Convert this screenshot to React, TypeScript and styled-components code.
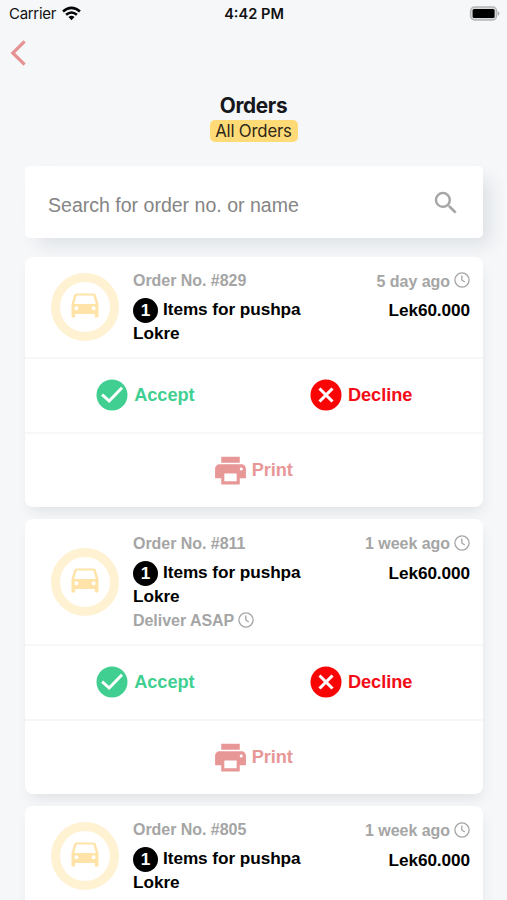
import React from "react";
import styled, { createGlobalStyle } from "styled-components";

const GlobalStyle = createGlobalStyle`
  * { box-sizing: border-box; }
  body {
    margin: 0;
    height: 900px;
    overflow: hidden;
    background: #f5f7f9;
    font-family: "Liberation Sans", Arial, sans-serif;
  }
`;

const Screen = styled.main`
  width: 507px;
  height: 900px;
  overflow: hidden;
  display: flex;
  flex-direction: column;
`;

const StatusBar = styled.header`
  height: 28px;
  padding: 0 7px 1px 9px;
  display: grid;
  grid-template-columns: 1fr auto 1fr;
  align-items: center;
  flex: none;
  font-family: Inter, sans-serif;
  color: #111;
`;

const Carrier = styled.div`
  display: flex;
  align-items: center;
  gap: 6px;
  font-size: 15px;
  letter-spacing: -0.3px;
`;

const Clock = styled.time`
  font-size: 14.6px;
  font-weight: 600;
  padding-right: 1px;
`;

const Battery = styled.div`
  display: flex;
  justify-content: flex-end;
`;

const Nav = styled.nav`
  height: 64px;
  flex: none;
  padding: 11px 0 0 10px;
`;

const BackButton = styled.button`
  display: block;
  padding: 0;
  border: 0;
  background: none;
`;

const Heading = styled.section`
  height: 74px;
  flex: none;
  display: flex;
  flex-direction: column;
  align-items: center;
  font-family: Inter, sans-serif;
  color: #16171c;
`;

const Title = styled.h1`
  margin: 0;
  height: 28px;
  font-size: 20.8px;
  line-height: 27px;
  font-weight: 700;
  letter-spacing: -0.35px;
`;

const Filter = styled.span`
  width: 88px;
  height: 21.5px;
  border-radius: 5px;
  background: #ffdb78;
  font-size: 16.8px;
  letter-spacing: -0.2px;
  line-height: 22px;
  text-align: center;
  color: #2e2818;
`;

const SearchBox = styled.label`
  height: 72px;
  flex: none;
  margin: 0 24.5px 18.5px 25px;
  padding: 0 21.5px 0 23px;
  display: flex;
  align-items: center;
  border-radius: 5px;
  background: #fff;
  box-shadow: 10px 10px 18px -3px rgba(50, 55, 65, 0.11);
`;

const SearchInput = styled.input`
  flex: 1;
  min-width: 0;
  height: 30px;
  margin-top: 7px;
  padding: 0;
  border: 0;
  outline: 0;
  background: none;
  font: 19.55px "Liberation Sans", Arial, sans-serif;
  &::placeholder { color: #858585; opacity: 1; }
`;

const SearchSlot = styled.span`
  display: flex;
  padding-top: 2px;
`;

const List = styled.section`
  display: flex;
  flex-direction: column;
  gap: 12px;
  margin: 0 24.5px 0 25px;
`;

const Card = styled.article`
  flex: none;
  border-radius: 8px;
  background: #fff;
  box-shadow: 2px 8px 14px -4px rgba(45, 55, 60, 0.11);
`;

const Info = styled.div<{ $tall: boolean }>`
  height: ${(p) => (p.$tall ? 125 : 100.5)}px;
  padding: 0 12.5px 0 26px;
  display: grid;
  grid-template-columns: 68px 180px 1fr;
  column-gap: 14px;
`;

const Ring = styled.div`
  width: 68px;
  height: 68px;
  align-self: center;
  display: grid;
  place-items: center;
  padding-bottom: 3px;
  border: 9px solid #fff2d3;
  border-radius: 50%;
`;

const Details = styled.div<{ $tall: boolean }>`
  padding-top: ${(p) => (p.$tall ? 15 : 14.5)}px;
`;

const Muted = styled.div`
  display: flex;
  align-items: center;
  gap: 4px;
  height: 19px;
  font-size: 16px;
  letter-spacing: -0.04px;
  font-weight: 700;
  color: #a5a5a5;
  white-space: nowrap;
`;

const ClockSlot = styled.span`
  display: flex;
  padding-bottom: 3px;
`;

const Customer = styled.div`
  margin-top: 6.5px;
  height: 52px;
  font-size: 17.2px;
  letter-spacing: -0.06px;
  line-height: 24px;
  font-weight: 700;
  color: #000;
`;

const Count = styled.span`
  display: inline-block;
  width: 25px;
  height: 25px;
  margin: -1px 5px -2px 0;
  border-radius: 50%;
  background: #000;
  color: #fff;
  text-align: center;
  line-height: 25px;
  vertical-align: middle;
`;

const Meta = styled.div`
  display: flex;
  flex-direction: column;
  align-items: flex-end;
  padding-top: 15.5px;
`;

const Price = styled.strong`
  margin-top: 9px;
  font-size: 17.2px;
  letter-spacing: -0.08px;
  line-height: 20px;
`;

const Row = styled.div<{ $columns: number }>`
  height: 75px;
  border-top: 2px solid #f6f7f7;
  display: grid;
  grid-template-columns: repeat(${(p) => p.$columns}, 1fr);
`;

const Action = styled.button<{ $color: string; $left?: number; $right?: number; $gap?: number }>`
  display: flex;
  align-items: center;
  justify-content: center;
  gap: ${(p) => p.$gap ?? 6}px;
  padding: 0 ${(p) => p.$right ?? 0}px 1px ${(p) => p.$left ?? 0}px;
  border: 0;
  background: none;
  color: ${(p) => p.$color};
  font: 700 18.2px "Liberation Sans", Arial, sans-serif;
  letter-spacing: -0.05px;
`;

const WifiIcon = () => (
  <svg width="19" height="15" viewBox="0 0 19 15" fill="none" stroke="#050505">
    <path d="M1 5.5Q9.5-1.7 18 5.5M4.1 8.8Q9.5 4.2 14.9 8.8" strokeWidth="2.6" />
    <path d="M6.5 11.1Q9.5 8.5 12.5 11.1L9.5 14.3Z" fill="#050505" stroke="none" />
  </svg>
);

const BatteryIcon = () => (
  <svg width="31" height="15" viewBox="0 0 31 15">
    <rect x="1.6" y="1" width="26" height="13" rx="4" fill="#d9dadb" stroke="#b4b5b6" strokeWidth="1.4" />
    <rect x="3.6" y="3" width="22" height="9" rx="1.5" fill="#000" />
    <path d="M28.8 5Q32 7.5 28.8 10Z" fill="#a8a9aa" />
  </svg>
);

const BackIcon = () => (
  <svg width="17" height="28" viewBox="0 0 17 28" fill="none" stroke="#e79292" strokeWidth="3.2">
    <path d="M14.6 2.4 2.8 14l11.8 11.6" />
  </svg>
);

const SearchIcon = () => (
  <svg width="30" height="30" viewBox="0 0 24 24" fill="#a5a5a5">
    <path d="M15.5 14h-.79l-.28-.27A6.47 6.47 0 0 0 16 9.5 6.5 6.5 0 1 0 9.5 16c1.61 0 3.09-.59 4.23-1.57l.27.28v.79l5 4.99L20.49 19zm-6 0C7.01 14 5 11.99 5 9.5S7.01 5 9.5 5 14 7.01 14 9.5 11.99 14 9.5 14" />
  </svg>
);

const CarIcon = () => (
  <svg width="28" height="25" viewBox="0 0 28 25" fill="#ffe3a9">
    <path
      fillRule="evenodd"
      d="M5.6.5H22.4c1.3 0 2.1.7 2.5 1.9L27.5 11v12.4c0 .7-.5 1.1-1.2 1.1H25c-.7 0-1.2-.4-1.2-1.1V21H4.2v2.4c0 .7-.5 1.1-1.2 1.1H1.7c-.7 0-1.2-.4-1.2-1.1V11L3.1 2.4C3.5 1.2 4.3.5 5.6.5ZM3.2 11h21.6L22.4 2.6H5.6ZM5.4 13.2a2 2 0 1 0 0 4 2 2 0 1 0 0-4ZM22.6 13.2a2 2 0 1 0 0 4 2 2 0 1 0 0-4Z"
    />
  </svg>
);

const ClockIcon = () => (
  <ClockSlot>
    <svg width="16" height="16" viewBox="0 0 16 16" fill="none" stroke="#a5a5a5" strokeWidth="1.3">
      <circle cx="8" cy="8" r="7.1" />
      <path d="M7.8 3.6V8l3 2" />
    </svg>
  </ClockSlot>
);

const CheckIcon = () => (
  <svg width="32" height="32" viewBox="0 0 32 32">
    <circle cx="16" cy="16" r="15.5" fill="#40cf91" />
    <path d="m6.1 15.7 7.1 6.3L26 8.7" fill="none" stroke="#fff" strokeWidth="3" />
  </svg>
);

const CrossIcon = () => (
  <svg width="32" height="32" viewBox="0 0 32 32">
    <circle cx="16" cy="16" r="15.5" fill="#fa0505" />
    <path d="m9.5 9.5 13 13m0-13-13 13" stroke="#fff" strokeWidth="3.1" />
  </svg>
);

const PrinterIcon = () => (
  <svg width="37" height="37" viewBox="0 0 24 24" fill="#e89797">
    <path d="M19 8H5c-1.66 0-3 1.34-3 3v6h4v4h12v-4h4v-6c0-1.66-1.34-3-3-3m-3 11H8v-5h8zm3-7c-.55 0-1-.45-1-1s.45-1 1-1 1 .45 1 1-.45 1-1 1m-1-9H6v4h12z" />
  </svg>
);

type Order = { number: number; age: string; asap?: boolean };

const orders: Order[] = [
  { number: 829, age: "5 day ago" },
  { number: 811, age: "1 week ago", asap: true },
  { number: 805, age: "1 week ago" },
];

function OrderCard({ order }: { order: Order }) {
  return (
    <Card>
      <Info $tall={!!order.asap}>
        <Ring><CarIcon /></Ring>
        <Details $tall={!!order.asap}>
          <Muted>Order No. #{order.number}</Muted>
          <Customer><Count>1</Count>Items for pushpa Lokre</Customer>
          {order.asap && <Muted>Deliver ASAP <ClockIcon /></Muted>}
        </Details>
        <Meta>
          <Muted>{order.age} <ClockIcon /></Muted>
          <Price>Lek60.000</Price>
        </Meta>
      </Info>
      <Row $columns={2}>
        <Action $color="#40cf91" $left={12}><CheckIcon />Accept</Action>
        <Action $color="#f20d16" $right={14}><CrossIcon />Decline</Action>
      </Row>
      <Row $columns={1}>
        <Action $color="#e89797" $gap={3} $right={3}><PrinterIcon />Print</Action>
      </Row>
    </Card>
  );
}

export default function App() {
  return (
    <>
      <GlobalStyle />
      <Screen>
        <StatusBar>
          <Carrier>Carrier <WifiIcon /></Carrier>
          <Clock>4:42 PM</Clock>
          <Battery><BatteryIcon /></Battery>
        </StatusBar>
        <Nav><BackButton aria-label="Back"><BackIcon /></BackButton></Nav>
        <Heading>
          <Title>Orders</Title>
          <Filter>All Orders</Filter>
        </Heading>
        <SearchBox>
          <SearchInput placeholder="Search for order no. or name" />
          <SearchSlot><SearchIcon /></SearchSlot>
        </SearchBox>
        <List>{orders.map((order) => <OrderCard key={order.number} order={order} />)}</List>
      </Screen>
    </>
  );
}
